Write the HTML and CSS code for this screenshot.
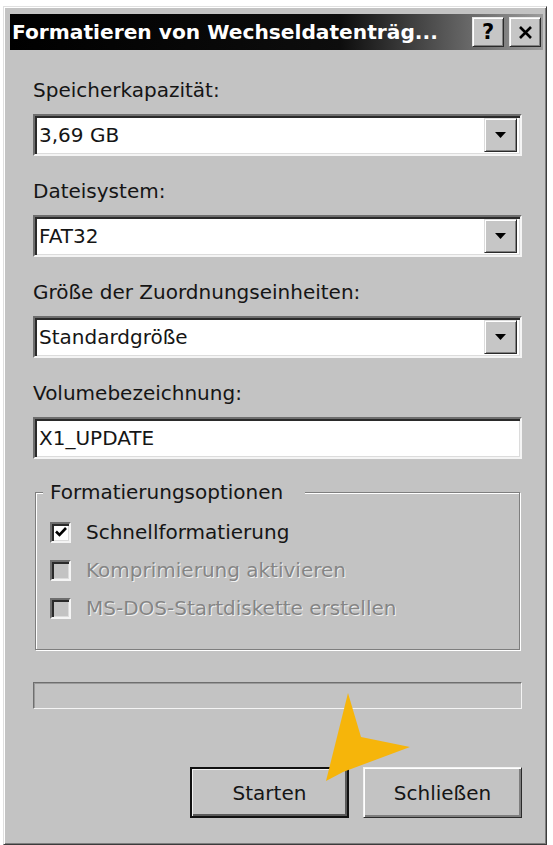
FILE: index.html
```html
<!DOCTYPE html>
<html lang="de">
<head>
<meta charset="utf-8">
<title>Formatieren von Wechseldatenträger</title>
<link rel="stylesheet" href="styles.css">
</head>
<body>
<div class="window">
  <div class="titlebar">
    <span class="title">Formatieren von Wechseldatenträg...</span>
    <div class="tbtns">
      <span class="tbtn help">?</span>
      <span class="tbtn close"><svg width="15" height="13" viewBox="0 0 15 13"><path d="M2 1 L13 12 M13 1 L2 12" stroke="#000" stroke-width="2.6" fill="none"/></svg></span>
    </div>
  </div>
  <div class="content">
    <div class="field">
      <div class="label">Speicherkapazität:</div>
      <div class="combo"><span class="value">3,69 GB</span><span class="drop"><svg width="11" height="6" viewBox="0 0 11 6"><path d="M0 0 H11 L5.5 6 Z" fill="#000"/></svg></span></div>
    </div>
    <div class="field">
      <div class="label">Dateisystem:</div>
      <div class="combo"><span class="value">FAT32</span><span class="drop"><svg width="11" height="6" viewBox="0 0 11 6"><path d="M0 0 H11 L5.5 6 Z" fill="#000"/></svg></span></div>
    </div>
    <div class="field">
      <div class="label">Größe der Zuordnungseinheiten:</div>
      <div class="combo"><span class="value">Standardgröße</span><span class="drop"><svg width="11" height="6" viewBox="0 0 11 6"><path d="M0 0 H11 L5.5 6 Z" fill="#000"/></svg></span></div>
    </div>
    <div class="field">
      <div class="label">Volumebezeichnung:</div>
      <div class="combo input"><span class="value">X1_UPDATE</span></div>
    </div>
    <div class="group">
      <div class="legend">Formatierungsoptionen</div>
      <div class="check"><span class="box on"><svg width="16" height="16" viewBox="0 0 16 16"><path d="M3 7.5 L6.5 11 L13 4" stroke="#000" stroke-width="2.6" fill="none"/></svg></span><span class="ctext">Schnellformatierung</span></div>
      <div class="check disabled"><span class="box"></span><span class="ctext">Komprimierung aktivieren</span></div>
      <div class="check disabled"><span class="box"></span><span class="ctext">MS-DOS-Startdiskette erstellen</span></div>
    </div>
    <div class="progress"></div>
    <div class="buttons">
      <div class="btn default"><span>Starten</span></div>
      <div class="btn"><span>Schließen</span></div>
    </div>
  </div>
</div>
<svg class="pointer" width="553" height="845" viewBox="0 0 553 845">
  <path d="M348 693 L361 737 L410 747 L343 772 L326 781 Z" fill="#f6b50a"/>
</svg>
</body>
</html>
```
FILE: styles.css
```css
html, body {
  margin: 0;
  padding: 0;
  background: #fff;
}
body {
  width: 553px;
  height: 845px;
  overflow: hidden;
  position: relative;
  font-family: "DejaVu Sans", Verdana, sans-serif;
  font-size: 20px;
  color: #151515;
}
.window {
  box-sizing: border-box;
  margin: 6px 0 0 3px;
  width: 544px;
  height: 839px;
  background: #c3c3c3;
  border: 1px solid;
  border-color: #e0e0e0 #3c3c3c #3c3c3c #e0e0e0;
  box-shadow: inset 1px 1px #fff, inset -1px -1px #7e7e7e;
  padding: 7px 3px 0 6px;
}
.titlebar {
  height: 36px;
  background: linear-gradient(to right, #000 0%, #0d0d0d 62%, #9c9c9c 100%);
  display: flex;
  align-items: center;
  justify-content: space-between;
  padding: 0 2px 0 2px;
}
.title {
  color: #fff;
  font-weight: bold;
  font-size: 20.2px;
  white-space: nowrap;
}
.tbtns {
  display: flex;
  gap: 5px;
}
.tbtn {
  box-sizing: border-box;
  width: 32px;
  height: 30px;
  background: #c6c6c6;
  border: 1px solid;
  border-color: #e8e8e8 #2a2a2a #2a2a2a #e8e8e8;
  box-shadow: inset 1px 1px #fff, inset -1px -1px #808080;
  display: flex;
  align-items: center;
  justify-content: center;
  font-weight: bold;
  font-size: 21px;
  color: #000;
}
.content {
  padding: 28px 21px 0 23px;
}
.field {
  margin-bottom: 23px;
}
.label {
  line-height: 24px;
  height: 24px;
  margin-bottom: 12px;
  white-space: nowrap;
}
.combo {
  box-sizing: border-box;
  height: 42px;
  background: #fff;
  border: 2px solid;
  border-color: #6e6e6e #f4f4f4 #f4f4f4 #6e6e6e;
  box-shadow: inset 2px 2px #2a2a2a, inset -1px -1px #dcdcdc;
  display: flex;
  align-items: center;
  justify-content: space-between;
  padding: 2px 3px 2px 4px;
}
.combo .value {
  line-height: 24px;
}
.drop {
  box-sizing: border-box;
  width: 33px;
  height: 34px;
  background: #c6c6c6;
  border: 1px solid;
  border-color: #dcdcdc #2a2a2a #2a2a2a #dcdcdc;
  box-shadow: inset 1px 1px #fff, inset -1px -1px #808080;
  display: flex;
  align-items: center;
  justify-content: center;
}
.combo.input {
  justify-content: flex-start;
}
.group {
  position: relative;
  box-sizing: border-box;
  margin: 33px 2px 0 2px;
  height: 158px;
  border: 1px solid #7e7e7e;
  box-shadow: inset 1px 1px #fff, 1px 1px #fff;
  padding: 20px 0 0 14px;
}
.legend {
  position: absolute;
  top: -13px;
  left: 7px;
  background: #c3c3c3;
  padding: 0 22px 0 7px;
  line-height: 24px;
}
.check {
  display: flex;
  align-items: center;
  height: 38px;
  gap: 15px;
}
.box {
  box-sizing: border-box;
  width: 21px;
  height: 21px;
  border: 2px solid;
  border-color: #6e6e6e #f4f4f4 #f4f4f4 #6e6e6e;
  box-shadow: inset 2px 2px #2a2a2a, inset -1px -1px #dcdcdc;
  background: #c3c3c3;
  display: flex;
  align-items: center;
  justify-content: center;
}
.box.on {
  background: #fff;
}
.check.disabled .ctext {
  color: #858585;
  text-shadow: 1px 1px #f2f2f2;
}
.progress {
  box-sizing: border-box;
  margin-top: 32px;
  height: 27px;
  border: 1px solid;
  border-color: #6e6e6e #f4f4f4 #f4f4f4 #6e6e6e;
  box-shadow: inset 1px 1px #9a9a9a;
}
.buttons {
  display: flex;
  justify-content: flex-end;
  gap: 14px;
  margin-top: 58px;
}
.btn {
  box-sizing: border-box;
  width: 159px;
  height: 51px;
  background: #c3c3c3;
  border: 1px solid;
  border-color: #f2f2f2 #2a2a2a #2a2a2a #f2f2f2;
  box-shadow: inset 1px 1px #fff, inset -2px -2px #7e7e7e;
  display: flex;
  align-items: center;
  justify-content: center;
}
.btn.default {
  border: 2px solid #111;
  box-shadow: inset 1px 1px #f2f2f2, inset -2px -2px #5a5a5a;
}
.pointer {
  position: absolute;
  left: 0;
  top: 0;
  pointer-events: none;
}
```
